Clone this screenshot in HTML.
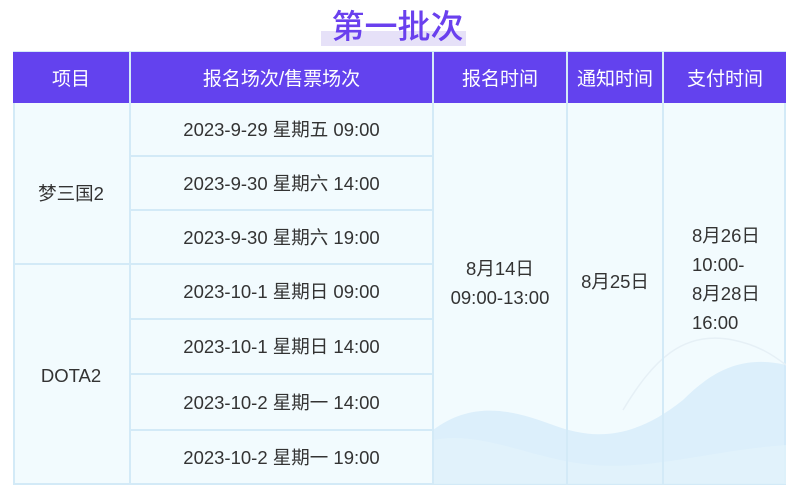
<!DOCTYPE html>
<html><head><meta charset="utf-8"><style>
body{margin:0;width:795px;height:491px;background:#fff;position:relative;overflow:hidden;font-family:"Liberation Sans","Noto Sans CJK SC",sans-serif;}
.title{position:absolute;left:0;width:795px;top:0px;text-align:center;font-size:33px;color:#6a40ee;font-weight:500;z-index:2}
.hl{position:absolute;left:321px;top:31px;width:145px;height:15px;background:#e6e1f8;z-index:1}
.tbl{position:absolute;left:13px;top:51px;width:773px;height:434px;background:#f2fbfe;border:2px solid #d3eaf7;box-sizing:border-box}
.h{position:absolute;top:52px;height:51px;background:#6342ee;color:#fff;font-size:19px;display:flex;align-items:center;justify-content:center}
.c{position:absolute;color:#333;font-size:18.5px;display:flex;align-items:center;justify-content:center;text-align:center;line-height:29px}
.vl{position:absolute;width:2px;background:#d3eaf7;top:52px;height:432px}
.hz{position:absolute;height:2px;background:#d3eaf7}
svg{position:absolute;left:13px;top:300px}
</style></head><body>
<div class="hl"></div><div class="title">第一批次</div>
<div class="tbl"></div>
<svg width="773" height="184" viewBox="0 0 773 184">
<path d="M420 184 L420 130 C460 100 500 110 540 125 C580 140 620 140 670 100 C700 70 730 55 773 65 L773 184 Z" fill="#d3e9f9" opacity="0.7"/>
<path d="M420 184 L420 140 C470 130 520 160 580 165 C640 170 700 150 773 145 L773 184 Z" fill="#e3f3fb" opacity="0.7"/>
<path d="M610 110 C640 60 670 30 720 40 C745 45 760 55 773 65" fill="none" stroke="#e6f0f6" stroke-width="1.5"/>
</svg>
<div class="h" style="left:13px;width:116px">项目</div>
<div class="h" style="left:131px;width:301px">报名场次/售票场次</div>
<div class="h" style="left:434px;width:132px">报名时间</div>
<div class="h" style="left:568px;width:94px">通知时间</div>
<div class="h" style="left:664px;width:122px">支付时间</div>
<div class="vl" style="left:129px"></div><div class="vl" style="left:432px"></div><div class="vl" style="left:566px"></div><div class="vl" style="left:662px"></div>
<div class="hz" style="left:131px;width:301px;top:155px"></div>
<div class="hz" style="left:131px;width:301px;top:209px"></div>
<div class="hz" style="left:13px;width:419px;top:263px"></div>
<div class="hz" style="left:131px;width:301px;top:318px"></div>
<div class="hz" style="left:131px;width:301px;top:373px"></div>
<div class="hz" style="left:131px;width:301px;top:429px"></div>
<div class="c" style="left:13px;width:116px;top:103px;height:180px">梦三国2</div>
<div class="c" style="left:13px;width:116px;top:265px;height:220px">DOTA2</div>
<div class="c" style="left:131px;width:301px;top:103px;height:52px">2023-9-29 星期五 09:00</div>
<div class="c" style="left:131px;width:301px;top:157px;height:52px">2023-9-30 星期六 14:00</div>
<div class="c" style="left:131px;width:301px;top:211px;height:52px">2023-9-30 星期六 19:00</div>
<div class="c" style="left:131px;width:301px;top:265px;height:53px">2023-10-1 星期日 09:00</div>
<div class="c" style="left:131px;width:301px;top:320px;height:53px">2023-10-1 星期日 14:00</div>
<div class="c" style="left:131px;width:301px;top:375px;height:54px">2023-10-2 星期一 14:00</div>
<div class="c" style="left:131px;width:301px;top:431px;height:53px">2023-10-2 星期一 19:00</div>
<div class="c" style="left:434px;width:132px;top:253px;height:60px">8月14日<br>09:00-13:00</div>
<div class="c" style="left:568px;width:94px;top:266px;height:30px">8月25日</div>
<div class="c" style="left:692px;width:90px;top:219px;height:120px;justify-content:flex-start;text-align:left">8月26日<br>10:00-<br>8月28日<br>16:00</div>
</body></html>
